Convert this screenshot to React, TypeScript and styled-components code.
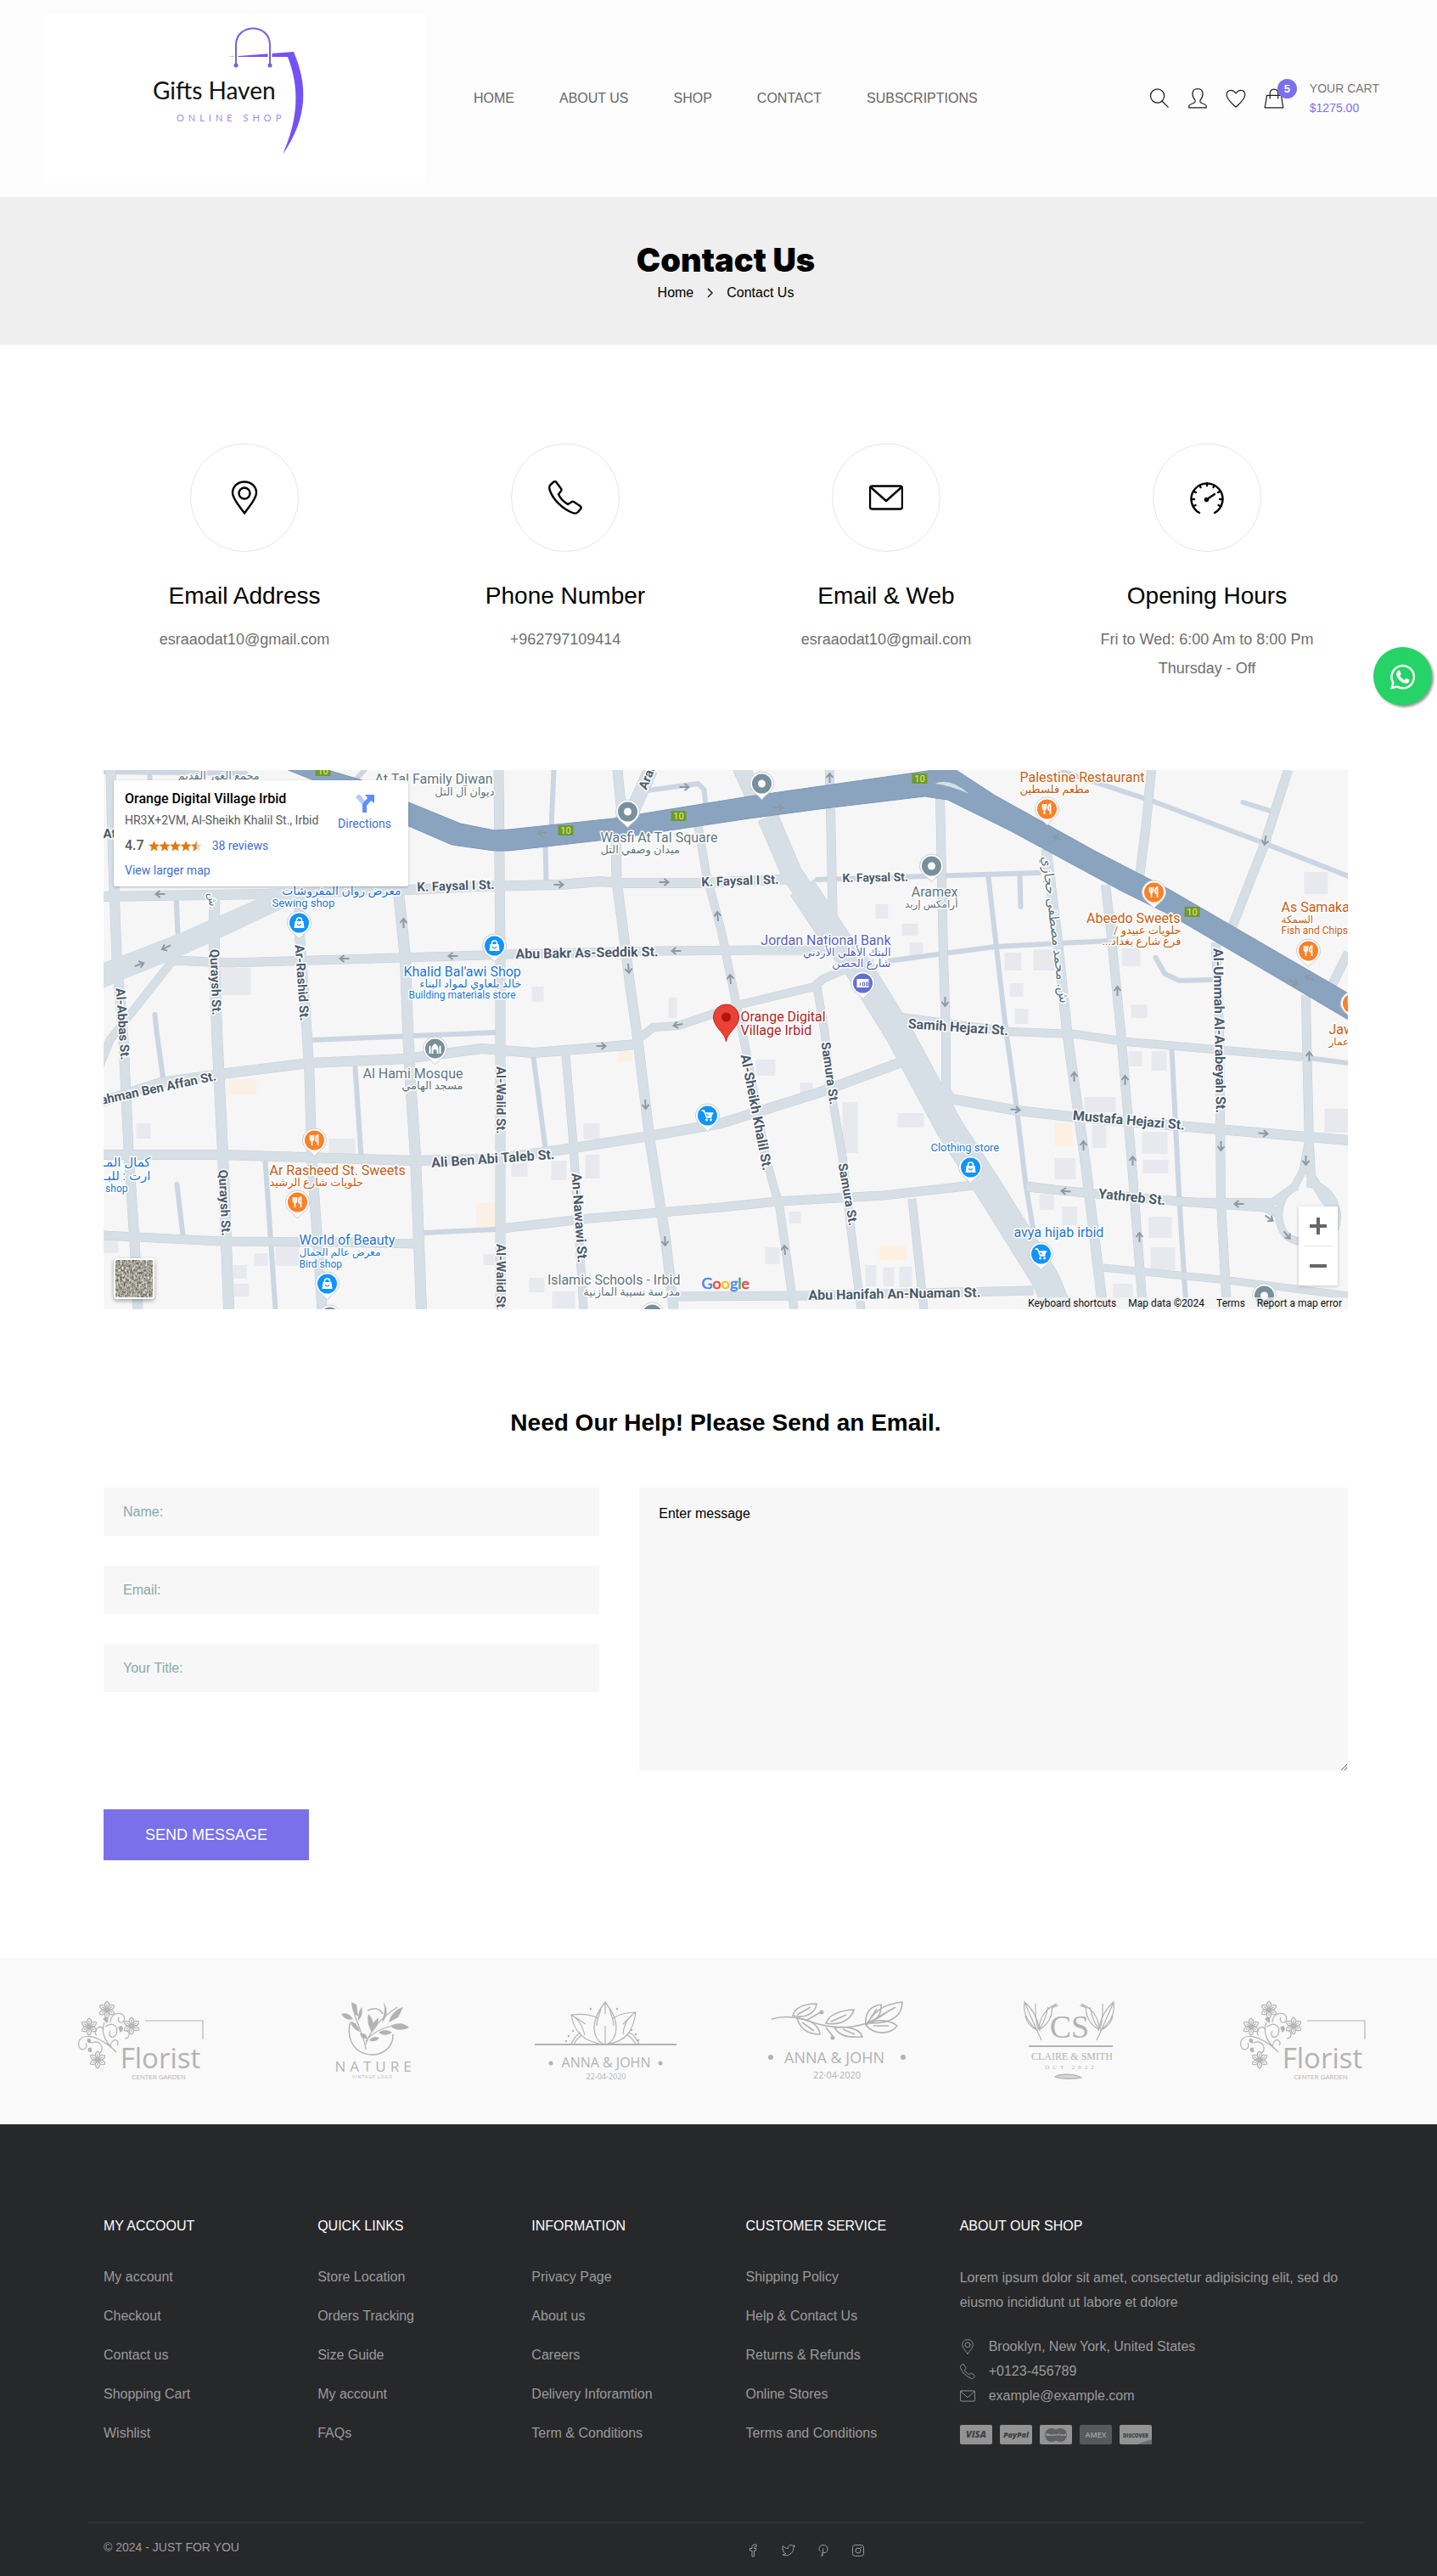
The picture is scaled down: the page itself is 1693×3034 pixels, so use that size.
import React from 'react';
import styled, { createGlobalStyle } from 'styled-components';

const GlobalStyle = createGlobalStyle`
  *, *::before, *::after { box-sizing: border-box; }
  body {
    margin: 0;
    background: #fff;
    color: #000;
    font-family: "Liberation Sans", Arial, sans-serif;
    font-size: 16px;
  }
  a { color: inherit; text-decoration: none; }
  h1, h2, h3, p, ul { margin: 0; padding: 0; font-weight: 400; }
  ul { list-style: none; }
  svg { display: block; }
`;

const ACCENT = '#7a70ea';

/* ---------- header ---------- */

const Header = styled.header`
  display: flex;
  align-items: center;
  padding: 17px 68px 17px 52px;
  background: #fdfdfd;
`;

const LogoLink = styled.a`
  flex: none;
  width: 449px;
  background: #fff;
`;

const Nav = styled.nav`
  display: flex;
  gap: 53px;
  margin-left: 57px;
  line-height: 24px;
  color: #666;
`;

const Tools = styled.div`
  display: flex;
  align-items: center;
  gap: 21px;
  margin-left: auto;
`;

const IconButton = styled.button`
  display: flex;
  padding: 0;
  border: 0;
  background: none;
  color: #1c1c1c;
  cursor: pointer;
`;

const CartLink = styled.a`
  position: relative;
  display: flex;
  align-items: center;
  gap: 30px;
  color: #1c1c1c;
`;

const Badge = styled.span`
  position: absolute;
  top: 0;
  left: 16px;
  width: 23px;
  height: 23px;
  border-radius: 50%;
  background: ${ACCENT};
  color: #fff;
  font-size: 13px;
  font-weight: 700;
  line-height: 23px;
  text-align: center;
`;

const CartText = styled.span`
  font-size: 14px;
  line-height: 23px;
  color: #777;
  white-space: nowrap;
`;

const CartTotal = styled.span`
  display: block;
  color: ${ACCENT};
`;

/* ---------- breadcrumb ---------- */

const Banner = styled.section`
  display: flex;
  flex-direction: column;
  align-items: center;
  padding: 48px 0 48px 17px;
  background: #efefef;
`;

const PageTitle = styled.h1`
  font-family: Inter, "Liberation Sans", sans-serif;
  font-size: 38px;
  font-weight: 900;
  line-height: 52px;
`;

const Crumbs = styled.nav`
  display: flex;
  align-items: center;
  gap: 15px;
  line-height: 26px;
`;

/* ---------- content ---------- */

const Container = styled.div`
  padding: 0 105px 0 122px;
`;

const InfoGrid = styled.section`
  display: grid;
  grid-template-columns: repeat(4, 1fr);
  padding: 116px 82px 103px 99px;
`;

const InfoCard = styled.div`
  display: flex;
  flex-direction: column;
  align-items: center;
  text-align: center;
`;

const InfoCircle = styled.div`
  display: flex;
  align-items: center;
  justify-content: center;
  width: 128px;
  height: 128px;
  margin-bottom: 34px;
  border: 1px solid #e6e6e6;
  border-radius: 50%;
`;

const InfoTitle = styled.h3`
  margin-bottom: 16px;
  font-size: 28px;
  line-height: 36px;
`;

const InfoText = styled.p`
  font-size: 18px;
  line-height: 34px;
  color: #6f6f6f;
`;

const MapFrame = styled.section`
  position: relative;
  height: 635px;
  overflow: hidden;
  background: #f6f6f6;
  font-family: Roboto, "DejaVu Sans", sans-serif;
`;

const PlaceCard = styled.div`
  position: absolute;
  top: 12px;
  left: 12px;
  display: flex;
  justify-content: space-between;
  width: 347px;
  height: 125px;
  padding: 12px 20px 0 13px;
  border-radius: 2px;
  background: #fff;
  box-shadow: 0 1px 3px rgba(0, 0, 0, 0.25);
  font-size: 14px;
  color: #3f6fd6;
`;

const PlaceName = styled.h2`
  font-size: 16px;
  font-weight: 500;
  line-height: 20px;
  color: #000;
`;

const PlaceAddress = styled.p`
  margin-top: 5px;
  line-height: 20px;
  color: #5b5b5b;
  white-space: nowrap;
`;

const Rating = styled.div`
  display: flex;
  align-items: center;
  gap: 5px;
  margin: 10px 0 9px;
  line-height: 20px;
`;

const Score = styled.span`
  font-size: 16px;
  font-weight: 500;
  color: #555;
`;

const Reviews = styled.a`
  margin-left: 6px;
`;

const MapLink = styled.a`
  line-height: 20px;
`;

const Directions = styled.a`
  display: flex;
  flex-direction: column;
  align-items: center;
  gap: 5px;
  padding-top: 4px;
`;

const ZoomBox = styled.div`
  position: absolute;
  right: 12px;
  bottom: 28px;
  width: 46px;
  background: #fff;
  box-shadow: 0 1px 4px rgba(0, 0, 0, 0.2);
`;

const ZoomButton = styled.button`
  display: flex;
  align-items: center;
  justify-content: center;
  width: 46px;
  height: 46px;
  padding: 0;
  border: 0;
  background: none;
  cursor: pointer;
`;

const ZoomRule = styled.div`
  height: 1px;
  margin: 0 6px;
  background: #e6e6e6;
`;

const LayerButton = styled.button`
  position: absolute;
  left: 12px;
  bottom: 12px;
  width: 48px;
  height: 48px;
  padding: 0;
  overflow: hidden;
  border: 2px solid #fff;
  border-radius: 4px;
  background: #a3a199;
  box-shadow: 0 2px 5px rgba(0, 0, 0, 0.35);
  cursor: pointer;
`;

const MapTerms = styled.div`
  position: absolute;
  right: 0;
  bottom: 0;
  display: flex;
  gap: 14px;
  padding: 0 7px;
  background: rgba(245, 245, 245, 0.7);
  font-size: 11px;
  line-height: 14px;
  color: #111;
  font-family: Roboto, "Liberation Sans", sans-serif;
  font-size: 12px;
  white-space: nowrap;
`;

/* ---------- form ---------- */

const FormTitle = styled.h2`
  margin: 116px 0 58px;
  font-size: 28px;
  font-weight: 700;
  line-height: 36px;
  text-align: center;
`;

const FormGrid = styled.div`
  display: grid;
  grid-template-columns: 7fr 10fr;
  column-gap: 47px;
  align-items: start;
`;

const Fields = styled.div`
  display: grid;
  gap: 35px;
`;

const HiddenLabel = styled.label`
  position: absolute;
  width: 1px;
  height: 1px;
  overflow: hidden;
  clip-path: inset(50%);
`;

const Input = styled.input`
  display: block;
  width: 100%;
  height: 57px;
  padding: 0 23px;
  border: 0;
  background: #f7f7f7;
  font: 16px "Liberation Sans", Arial, sans-serif;
  &::placeholder { color: #86aaa9; opacity: 1; }
`;

const TextArea = styled.textarea`
  display: block;
  width: 100%;
  height: 334px;
  padding: 22px 23px;
  border: 0;
  background: #f7f7f7;
  font: 16px "Liberation Sans", Arial, sans-serif;
  &::placeholder { color: #000; opacity: 1; }
`;

const SendButton = styled.button`
  height: 60px;
  margin: 45px 0 115px;
  padding: 0 49px;
  border: 0;
  background: ${ACCENT};
  color: #fff;
  font: 18px "Liberation Sans", Arial, sans-serif;
  cursor: pointer;
`;

/* ---------- brands ---------- */

const Brands = styled.section`
  display: grid;
  grid-template-columns: repeat(6, 1fr);
  justify-items: center;
  padding: 48px 22px 48px 28px;
  background: #f9f9f9;
`;

/* ---------- footer ---------- */

const Footer = styled.footer`
  padding: 108px 86px 0 104px;
  background: #27282a;
  color: #9b9b9b;
`;

const FooterGrid = styled.div`
  display: grid;
  grid-template-columns: 252fr 252fr 252fr 252fr 458fr;
  padding: 0 18px 90px;
`;

const FooterTitle = styled.h3`
  margin-bottom: 34px;
  font-size: 16px;
  line-height: 24px;
  color: #fff;
`;

const LinkList = styled.ul`
  display: grid;
  gap: 18px;
  line-height: 28px;
`;

const About = styled.p`
  margin-bottom: 23px;
  line-height: 29px;
`;

const ContactRow = styled.li`
  display: flex;
  align-items: center;
  gap: 16px;
  line-height: 29px;
`;

const Cards = styled.div`
  display: flex;
  gap: 9px;
  margin-top: 20px;
`;

const FooterBottom = styled.div`
  display: grid;
  grid-template-columns: 1fr 1fr;
  align-items: center;
  height: 64px;
  padding: 0 18px 6px;
  border-top: 2px solid #303133;
  font-size: 14px;
`;

const Socials = styled.div`
  display: flex;
  gap: 25px;
  padding: 7px 0 0 24px;
`;

const WhatsApp = styled.a`
  position: fixed;
  top: 762px;
  right: 6px;
  display: flex;
  align-items: center;
  justify-content: center;
  width: 69px;
  height: 69px;
  border-radius: 50%;
  background: #25d366;
  box-shadow: 2px 2px 3px #999;
`;

/* ---------- icons ---------- */

type IconName = 'search' | 'user' | 'heart' | 'bag' | 'pin' | 'phone' | 'mail' | 'gauge';

const shapes: Record<IconName, React.ReactNode> = {
  search: (
    <>
      <circle cx="16" cy="15" r="13.5" />
      <path d="M25 25 37 37" />
    </>
  ),
  user: (
    <path d="M20 1c-6 0-10 4-10 10 0 5 2 9 5 12v4c0 2-12 4-12 8v3h34v-3c0-4-12-6-12-8v-4c3-3 5-7 5-12 0-6-4-10-10-10z" />
  ),
  heart: (
    <path d="M20 37C14 31 2 22 2 13 2 7 6 4 10.500 4 15 4 18 7 20 10c2-3 5-6 9.500-6C34 4 38 7 38 13c0 9-12 18-18 24z" />
  ),
  bag: (
    <>
      <path d="M6 14h28l4 24H2z" />
      <path d="M12 20V11c0-5 3-9 8-9s8 4 8 9v9" />
    </>
  ),
  pin: (
    <>
      <path d="M20 38.500C15 31 6 22 6 14.500 6 7 12 1.500 20 1.500S34 7 34 14.500C34 22 25 31 20 38.500z" />
      <circle cx="20" cy="15" r="6.500" />
    </>
  ),
  phone: (
    <path d="M9 1.500 15 9.500C16 11 15.500 12 14.500 13L12 16C14 21 18 25 23 28L27 25.500C28 24.500 29 24.500 30 25L37.500 30C39 31 39 32.500 38 33.500L35 37C33 39 31 39 28.500 38 17 33.500 6 23 2 12 .5 8 1 6 3 4.500L6.500 1.500C7.500.7 8.300.7 9 1.500z" />
  ),
  mail: (
    <>
      <rect x="1" y="6.500" width="38" height="27" rx="2.500" />
      <path d="m2 8 18 16L38 8" />
    </>
  ),
  gauge: (
    <>
      <path d="M11 38a18.500 18.500 0 1 1 18 0" />
      <path d="M20 3v3M11.500 6l1 2M28.500 6l-1 2M5 13l2 1M35 13l-2 1M2 22h3M38 22h-3M4.500 30l2-1M35.500 30l-2-1M20 22l9-6" />
      <circle cx="19.500" cy="22.500" r="1.600" />
    </>
  ),
};

function Icon({ name, size, weight }: { name: IconName; size: number; weight: number }) {
  return (
    <svg
      width={size}
      height={size}
      viewBox="0 0 40 40"
      fill="none"
      stroke="currentColor"
      strokeWidth={weight}
      strokeLinejoin="round"
      strokeLinecap="round"
      aria-hidden="true"
    >
      {shapes[name]}
    </svg>
  );
}

function ShopLogo() {
  return (
    <svg viewBox="0 0 449 198" width="100%" role="img" aria-label="Gifts Haven online shop">
      <path d="M216 50 294 44C310 82 312 120 281 165 300 122 301 86 287 50z" fill="#7452f5" />
      <path d="M226 59V36c0-26 40-26 40 0v23" fill="none" stroke="#fff" strokeWidth="5" />
      <path d="M226 59V36c0-26 40-26 40 0v23" fill="none" stroke="#7562dc" strokeWidth="2" />
      <circle cx="226" cy="60" r="2.500" fill="#7562dc" />
      <circle cx="266" cy="60" r="2.500" fill="#7562dc" />
      <text x="128" y="100" fontFamily="Lato, sans-serif" fontSize="28" fill="#111">Gifts Haven</text>
      <text x="156" y="126" fontFamily="Lato, sans-serif" fontSize="11" letterSpacing="5" fill="#a18bea">ONLINE SHOP</text>
    </svg>
  );
}

/* ---------- map ---------- */

const roads: [number, string][] = [
  [11, '131,907 133,990 138,1128 146,1225 152,1355 159,1462 163,1542'],
  [11, '122,1056 310,1053 480,1048 560,1044 610,1043 660,1042 707,1038 730,1040 830,1040 940,1035'],
  [9, '205,1130 130,1225 118,1255'],
  [12, '253,1050 253,1128 256,1215 263,1358 270,1542'],
  [11, '353,1055 353,1095 362,1215 365,1265 368,1368 375,1468 380,1542'],
  [10, '205,1131 270,1134 473,1128 600,1124 777,1120 897,1119 975,1119'],
  [12, '470,1050 478,1128 481,1215 484,1272 490,1362 497,1542'],
  [11, '588,907 590,1128 590,1542'],
  [11, '728,907 733,958 726,992 727,1038 733,1082 743,1162 752,1225 766,1342 785,1462 794,1542'],
  [16, '767,907 747,952'],
  [9, '823,973 833,1032 850,1095 867,1178 876,1220 903,1365 919,1422 936,1542'],
  [20, '872,900 890,940'],
  [24, '905,962 933,1028 965,1075'],
  [32, '945,1045 987,1108 1013,1142 1060,1218 1119,1328 1167,1402 1233,1508 1250,1550'],
  [10, '978,907 978,925'],
  [10, '979,952 982,1095'],
  [9, '1030,1135 1000,1140 970,1153 960,1162 873,1183 800,1208 770,1210 750,1226'],
  [9, '963,1162 972,1215 979,1282 993,1362 1003,1448 1015,1542'],
  [10, '1108,938 1112,1128 1115,1215 1115,1285 1123,1296'],
  [11, '1233,1000 1245,1095 1258,1218 1280,1375 1300,1542'],
  [10, '1303,1042 1310,1105 1321,1215 1333,1358 1347,1542'],
  [10, '1357,907 1350,978 1343,1032'],
  [10, '1518,907 1490,995 1452,1092'],
  [10, '1589,1122 1570,1160'],
  [10, '1433,1110 1437,1215 1439,1415 1446,1542'],
  [10, '1539,1172 1540,1225 1543,1348 1545,1385 1560,1410 1576,1432'],
  [8, '1543,1340 1535,1380 1525,1398 1500,1416 1390,1415 1280,1405 1210,1396'],
  [9, '1063,1198 1190,1215 1267,1218 1328,1227 1534,1245'],
  [11, '1120,1294 1199,1308 1261,1315 1400,1327 1589,1343'],
  [11, '122,1360 261,1360 487,1367 582,1365 657,1355 766,1338 850,1323 965,1287 1065,1250'],
  [10, '1210,1398 1280,1405 1390,1415 1491,1422 1508,1430'],
  [10, '591,1447 695,1435 850,1422 917,1415 1041,1408 1156,1395'],
  [9, '1075,1412 1089,1542'],
  [10, '794,1527 953,1526 1218,1520'],
  [8, '1300,1493 1448,1508 1589,1526'],
  [11, '122,1297 190,1275 261,1265 365,1252 478,1247 568,1235 629,1240 752,1230'],
  [9, '667,1242 676,1348 688,1542'],
  [10, '122,1455 261,1462 384,1463 495,1465'],
  [8, '1529,1397 C1508,1405 1503,1430 1511,1448 C1520,1468 1560,1470 1572,1450 C1584,1425 1566,1394 1540,1394'],
];

const lanes: string[] = [
  '122,909 290,911',
  '177,907 177,925',
  '208,1055 210,1100',
  '367,1225 584,1216',
  '183,1195 185,1215 193,1272',
  '653,907 650,975',
  '643,995 644,1038',
  '763,931 823,923 830,930 832,948',
  '963,1036 1093,1032 1225,1028',
  '1047,1132 1090,1126 1173,1115 1307,1108',
  '1165,1033 1185,1208 1197,1295 1209,1395 1218,1450',
  '1202,1032 1203,1068',
  '1250,908 1357,943 1487,992 1589,1032',
  '1465,945 1497,955',
  '1362,1128 1373,1147 1390,1155 1427,1154',
  '1381,1235 1390,1415 1398,1542',
  '497,1452 584,1448',
  '419,1258 426,1362',
  '629,1245 643,1352',
  '313,1367 325,1542',
  '209,1395 216,1455',
  '1534,1245 1589,1252',
  '430,907 420,918',
];

const buildings: [number, number, number, number, string?][] = [
  [260, 1140, 36, 32], [627, 1162, 14, 18], [788, 1175, 10, 24], [1032, 1065, 15, 17], [1063, 1088, 19, 14],
  [1072, 1110, 16, 15], [1184, 1122, 20, 21], [1218, 1118, 25, 25], [1190, 1158, 16, 16], [1196, 1188, 16, 18],
  [1322, 1117, 22, 21], [1333, 1183, 19, 16], [1537, 1027, 28, 26], [161, 1323, 17, 18], [270, 1271, 33, 18, '#faf0e4'],
  [388, 1341, 31, 20], [603, 1370, 19, 16], [650, 1367, 18, 23], [690, 1360, 17, 28], [688, 1323, 19, 19],
  [562, 1417, 22, 28, '#faf0e4'], [325, 1465, 28, 26], [624, 1505, 18, 17], [651, 1521, 27, 20], [728, 1238, 17, 12, '#faf0e4'],
  [570, 1477, 13, 13], [275, 1490, 16, 16], [276, 1512, 18, 15], [891, 1248, 23, 19], [943, 1275, 15, 17],
  [993, 1298, 18, 60], [1058, 1311, 31, 17], [1278, 1292, 37, 18], [1243, 1323, 21, 27, '#fdf0e0'], [1287, 1325, 17, 27],
  [1243, 1364, 25, 25], [1346, 1333, 30, 26], [1347, 1366, 30, 16], [1357, 1238, 18, 23], [1330, 1238, 16, 18],
  [1561, 1306, 28, 28], [1225, 1407, 17, 18], [1252, 1421, 18, 22], [1354, 1433, 27, 25], [1356, 1469, 29, 27],
  [1036, 1467, 32, 17, '#fdf0e0'], [1020, 1490, 13, 25], [1041, 1493, 13, 22], [1060, 1492, 15, 24], [902, 1469, 17, 20],
  [930, 1427, 14, 14], [1312, 1512, 23, 19], [122, 1458, 18, 18], [300, 1476, 16, 15],
];

const arrows: [number, number, number][] = [
  [189, 1053, 180], [196, 1116, 155], [165, 1136, -20], [406, 1129, 180], [476, 1087, -90], [534, 1126, 180],
  [639, 981, 175], [659, 1042, 0], [783, 1039, 0], [807, 927, 0], [918, 951, -5], [978, 916, -90],
  [846, 1079, -95], [797, 1120, 180], [741, 1141, 85], [861, 1153, -95], [799, 1207, 170], [1246, 987, 205],
  [1491, 990, 100], [1114, 1180, 90], [1317, 1167, -90], [1525, 1157, 25], [1543, 1152, 205], [709, 1232, 0],
  [761, 1301, 87], [784, 1462, 87], [925, 1472, -95], [1266, 1268, -90], [1326, 1272, -90], [1277, 1349, -90],
  [1335, 1367, -90], [1343, 1457, -90], [1197, 1307, 5], [1489, 1335, 5], [1439, 1350, 90], [1256, 1403, 185],
  [1460, 1418, 180], [1496, 1435, 35], [1517, 1455, 50], [1539, 1367, 90], [1543, 1244, -90],
];

type Tone = 'street' | 'grey' | 'blue' | 'orange' | 'violet' | 'red';
const tones: Record<Tone, string> = {
  street: '#4a5a6b',
  grey: '#5f7681',
  blue: '#1f76d2',
  orange: '#c75d13',
  violet: '#5a63c0',
  red: '#b3221c',
};

interface Label {
  t: string;
  x: number;
  y: number;
  c: Tone;
  s?: number;
  r?: number;
  end?: boolean;
  rtl?: boolean;
}

const labels: Label[] = [
  { t: 'مجمع الغور القديم', x: 210, y: 918, c: 'grey', s: 13 },
  { t: 'At Tal Family Diwan', x: 442, y: 923, c: 'grey', s: 16 },
  { t: 'ديوان آل التل', x: 583, y: 937, c: 'grey', s: 13, end: true },
  { t: 'At', x: 122, y: 987, c: 'street' },
  { t: 'K. Faysal I St.', x: 492, y: 1050, c: 'street', r: -2 },
  { t: 'ش.', x: 246, y: 1052, c: 'grey', s: 13, r: 85 },
  { t: 'معرض روان المفروشات', x: 473, y: 1054, c: 'blue', s: 14, end: true },
  { t: 'Sewing shop', x: 321, y: 1068, c: 'blue', s: 13 },
  { t: "Khalid Bal'awi Shop", x: 476, y: 1150, c: 'blue', s: 16 },
  { t: 'خالد بلعاوي لمواد البناء', x: 615, y: 1163, c: 'blue', s: 13, end: true },
  { t: 'Building materials store', x: 482, y: 1176, c: 'blue', s: 12 },
  { t: 'Quraysh St.', x: 248, y: 1118, c: 'street', r: 88 },
  { t: 'Ar-Rashid St.', x: 348, y: 1113, c: 'street', r: 86 },
  { t: 'Al-Abbas St.', x: 137, y: 1164, c: 'street', r: 86 },
  { t: 'Abu Bakr As-Seddik St.', x: 608, y: 1129, c: 'street', r: -1, s: 16 },
  { t: 'Arar St.', x: 762, y: 931, c: 'street', r: -68 },
  { t: 'Wasfi At Tal Square', x: 708, y: 992, c: 'grey', s: 16 },
  { t: 'ميدان وصفي التل', x: 708, y: 1005, c: 'grey', s: 13 },
  { t: 'K. Faysal I St.', x: 827, y: 1044, c: 'street', r: -2 },
  { t: 'K. Faysal St.', x: 993, y: 1039, c: 'street', r: -1, s: 14 },
  { t: 'Aramex', x: 1129, y: 1056, c: 'grey', s: 16, end: true },
  { t: 'أرامكس إربد', x: 1129, y: 1069, c: 'grey', s: 12, end: true },
  { t: 'Jordan National Bank', x: 1050, y: 1113, c: 'violet', s: 16, end: true },
  { t: 'البنك الأهلي الأردني', x: 1050, y: 1126, c: 'violet', s: 13, end: true },
  { t: 'شارع الحصن', x: 1050, y: 1139, c: 'violet', s: 13, end: true },
  { t: 'Orange Digital', x: 873, y: 1203, c: 'red', s: 16 },
  { t: 'Village Irbid', x: 873, y: 1219, c: 'red', s: 16 },
  { t: 'Samih Hejazi St.', x: 1070, y: 1211, c: 'street', r: 4, s: 16 },
  { t: 'Palestine Restaurant', x: 1202, y: 921, c: 'orange', s: 16 },
  { t: 'مطعم فلسطين', x: 1202, y: 934, c: 'orange', s: 13 },
  { t: 'ش. محمد مصطفى حجازي', x: 1228, y: 1009, c: 'grey', r: 83, s: 16 },
  { t: 'Abeedo Sweets', x: 1391, y: 1087, c: 'orange', s: 16, end: true },
  { t: 'حلويات عبيدو /', x: 1392, y: 1100, c: 'orange', s: 13, rtl: true },
  { t: 'فرع شارع بغداد...', x: 1392, y: 1113, c: 'orange', s: 13, rtl: true },
  { t: 'As Samaka', x: 1510, y: 1074, c: 'orange', s: 16 },
  { t: 'السمكة', x: 1510, y: 1087, c: 'orange', s: 12 },
  { t: 'Fish and Chips', x: 1510, y: 1100, c: 'orange', s: 12 },
  { t: 'Jawharat', x: 1566, y: 1218, c: 'orange', s: 16 },
  { t: 'عمار', x: 1566, y: 1231, c: 'orange', s: 12 },
  { t: 'Al-Ummah Al-Arabeyah St.', x: 1430, y: 1117, c: 'street', r: 89, s: 16 },
  { t: 'Rahman Ben Affan St.', x: 256, y: 1272, c: 'street', r: -12, end: true },
  { t: 'Al Hami Mosque', x: 546, y: 1270, c: 'grey', s: 16, end: true },
  { t: 'مسجد الهامي', x: 546, y: 1283, c: 'grey', s: 13, end: true },
  { t: 'Al-Walid St.', x: 585, y: 1256, c: 'street', r: 90 },
  { t: 'Al-Walid St.', x: 585, y: 1465, c: 'street', r: 90 },
  { t: 'Ar Rasheed St. Sweets', x: 318, y: 1384, c: 'orange', s: 16 },
  { t: 'حلويات شارع الرشيد', x: 318, y: 1397, c: 'orange', s: 13 },
  { t: 'كمال المـ', x: 178, y: 1374, c: 'blue', s: 15, end: true },
  { t: 'ارت : للبـ', x: 178, y: 1390, c: 'blue', s: 15, rtl: true },
  { t: 'shop', x: 151, y: 1404, c: 'blue', s: 12, end: true },
  { t: 'Quraysh St.', x: 258, y: 1378, c: 'street', r: 87 },
  { t: 'Ali Ben Abi Taleb St.', x: 509, y: 1375, c: 'street', r: -4, s: 16 },
  { t: 'World of Beauty', x: 353, y: 1466, c: 'blue', s: 16 },
  { t: 'معرض عالم الجمال', x: 353, y: 1479, c: 'blue', s: 12 },
  { t: 'Bird shop', x: 353, y: 1493, c: 'blue', s: 12 },
  { t: 'An-Nawawi St.', x: 674, y: 1382, c: 'street', r: 86, s: 16 },
  { t: 'Islamic Schools - Irbid', x: 802, y: 1513, c: 'grey', s: 16, end: true },
  { t: 'مدرسة نسيبة المازنية', x: 802, y: 1526, c: 'grey', s: 13, end: true },
  { t: 'Al-Sheikh Khalil St.', x: 873, y: 1243, c: 'street', r: 79, s: 16 },
  { t: 'Samura St.', x: 968, y: 1228, c: 'street', r: 82 },
  { t: 'Samura St.', x: 988, y: 1371, c: 'street', r: 80 },
  { t: 'Clothing store', x: 1097, y: 1356, c: 'blue', s: 13 },
  { t: 'avya hijab irbid', x: 1195, y: 1457, c: 'blue', s: 16 },
  { t: 'Mustafa Hejazi St.', x: 1264, y: 1319, c: 'street', r: 5, s: 16 },
  { t: 'Yathreb St.', x: 1294, y: 1411, c: 'street', r: 6, s: 16 },
  { t: 'Abu Hanifah An-Nuaman St.', x: 953, y: 1531, c: 'street', r: -1, s: 16 },
];

type PinKind = 'shop' | 'cart' | 'food' | 'dot' | 'bank' | 'mosque';
const pins: [PinKind, number, number][] = [
  ['shop', 353, 1087], ['shop', 583, 1114], ['dot', 740, 956], ['dot', 898, 923], ['dot', 1098, 1020],
  ['bank', 1017, 1158], ['food', 1234, 953], ['food', 1360, 1051], ['food', 1542, 1120], ['food', 1594, 1182],
  ['mosque', 513, 1235], ['food', 371, 1343], ['food', 351, 1416], ['shop', 386, 1512], ['dot', 389, 1551],
  ['cart', 834, 1314], ['mosque', 769, 1548], ['shop', 1144, 1375], ['cart', 1227, 1477], ['dot', 1490, 1526],
];
const pinFill: Record<PinKind, string> = {
  shop: '#1194fb', cart: '#1194fb', food: '#fa8128', dot: '#78909c', bank: '#6470d0', mosque: '#78909c',
};
const pinGlyph: Record<PinKind, React.ReactNode> = {
  shop: (
    <>
      <path d="M-5-2H5L6 6H-6z" fill="#fff" />
      <path d="M-3-2v-1a3 3 0 0 1 6 0v1" fill="none" stroke="#fff" strokeWidth="1.500" />
      <path d="M-2 1a2 2 0 0 0 4 0" fill="none" stroke="#1194fb" strokeWidth="1.200" />
    </>
  ),
  cart: (
    <>
      <path d="M-7-6h3l3 8h6M-3-3h9L4 1h-5z" fill="#fff" stroke="#fff" strokeWidth="1.300" />
      <circle cx="-1" cy="5" r="1.400" fill="#fff" />
      <circle cx="4" cy="5" r="1.400" fill="#fff" />
    </>
  ),
  food: (
    <path d="M-5-6v4c0 3 4 3 4 0v-4M-3-6V6M4 6V-6C1-5 1-1 2 1h2" fill="none" stroke="#fff" strokeWidth="1.700" />
  ),
  dot: <circle r="4.500" fill="#fff" />,
  bank: (
    <>
      <rect x="-7" y="-5" width="14" height="10" fill="#fff" />
      <path d="M-3-1v4M0-1v4h2v-4zM4-1v4h2v-4z" fill="none" stroke="#6470d0" />
    </>
  ),
  mosque: (
    <path d="M-7 6v-8l1-2 1 2V6zM5 6v-8l1-2 1 2V6zM-4 6V0q0-3 4-6 4 3 4 6v6H2V2Q0 0-2 2v4z" fill="#fff" />
  ),
};

const path = (points: string) => 'M' + points.replace(/,/g, ' ');

function CityMap() {
  return (
    <svg
      viewBox="122 907 1467 635"
      width="100%"
      height="100%"
      preserveAspectRatio="xMidYMid slice"
      role="img"
      aria-label="Street map of Irbid"
    >
      <rect x="0" y="800" width="1800" height="900" fill="#f6f6f6" />
      {buildings.map(([x, y, w, h, fill], i) => (
        <rect key={i} x={x} y={y} width={w} height={h} fill={fill ?? '#e8e9ef'} />
      ))}
      <g fill="none" stroke="#cbd6e2" strokeLinejoin="round" strokeLinecap="round" strokeWidth="6">
        {lanes.map((p) => <path key={p} d={path(p)} />)}
      </g>
      <g fill="none" strokeLinejoin="round">
        {roads.map(([w, p]) => <path key={p} d={path(p)} stroke="#c5cfd8" strokeWidth={w + 1} />)}
        {roads.map(([w, p]) => <path key={p} d={path(p)} stroke="#d6dfe6" strokeWidth={w} />)}
      </g>
      <path d="M122 1134 210 1100 310 1056H363L260 1105 210 1128 150 1152 122 1164z" fill="#d6dfe6" />
      <path
        d="M387 907 427 919 482 945 543 970 583 978 600 977 723 964 883 938 1100 907H1127L1173 937 1290 1002 1377 1047 1589 1170V1201L1540 1172 1380 1078 1323 1050 1190 978 1117 942 1090 938 973 952 883 964 723 988 600 1002H583L533 995 482 973 410 935 340 907z"
        fill="#8aa4c0"
        stroke="#7b97b6"
      />
      <path d="M1102 923Q1120 915 1142 935 1120 925 1102 923z" fill="#d6dfe6" />
      {arrows.map(([x, y, r]) => (
        <path
          key={`${x}-${y}`}
          d="M-6 0H4M0-4 5 0 0 4"
          transform={`translate(${x} ${y}) rotate(${r})`}
          fill="none"
          stroke="#8d98a3"
          strokeWidth="2"
        />
      ))}
      {[[381, 908], [667, 978], [800, 961], [1084, 917], [1405, 1074]].map(([x, y]) => (
        <g key={x} transform={`translate(${x} ${y})`}>
          <rect x="-9" y="-6" width="18" height="12" fill="#6a9a35" />
          <text y="4" textAnchor="middle" fontSize="11" fill="#f2ee4e">10</text>
        </g>
      ))}
      {labels.map((l, i) => (
        <text
          key={i}
          transform={`translate(${l.x} ${l.y}) rotate(${l.r ?? 0})`}
          textAnchor={l.end ? 'end' : 'start'}
          direction={l.rtl ? 'rtl' : 'ltr'}
          fontSize={l.s ?? 15}
          fontWeight={l.c === 'street' ? 700 : 400}
          fill={tones[l.c]}
          stroke="#fff"
          strokeWidth="3"
          strokeLinejoin="round"
          paintOrder="stroke"
        >
          {l.t}
        </text>
      ))}
      {pins.map(([kind, x, y]) => (
        <g key={`${x}-${y}`} transform={`translate(${x} ${y})`}>
          <path d="M0 19C-3 14-14 9-14 0A14 14 0 0 1 14 0C14 9 3 14 0 19z" fill="#fff" stroke="#c9ccd1" strokeWidth="1" />
          <circle r="11.500" fill={pinFill[kind]} />
          {pinGlyph[kind]}
        </g>
      ))}
      <path
        d="M856 1227C855 1216 841 1210 841 1198A15 15 0 0 1 871 1198C871 1210 857 1216 856 1227z"
        fill="#ea4335"
        stroke="#c5221f"
      />
      <circle cx="856" cy="1198" r="5.500" fill="#b31412" />
      <text x="827" y="1518" fontFamily="Lato, sans-serif" fontSize="18" fontWeight="400">
        {[['G', '#4285f4'], ['o', '#ea4335'], ['o', '#fbbc04'], ['g', '#4285f4'], ['l', '#34a853'], ['e', '#ea4335']].map(
          ([letter, color], i) => <tspan key={i} fill={color} stroke={color} strokeWidth="0.5">{letter}</tspan>,
        )}
      </text>
    </svg>
  );
}

function Stars() {
  const star = 'M6.500 0 8.300 4.500 13 4.800 9.400 7.900 10.600 12.600 6.500 10 2.400 12.600 3.600 7.900 0 4.800 4.700 4.500z';
  return (
    <svg width="64" height="13" viewBox="0 0 64 13" role="img" aria-label="4.7 stars">
      {[0, 12.5, 25, 37.5].map((x) => <path key={x} d={star} transform={`translate(${x} 0)`} fill="#e17a10" />)}
      <path d={star} transform="translate(50 0)" fill="#d4d4d4" />
      <path d="M56.500 0V10L52.400 12.600 53.600 7.900 50 4.800 54.700 4.500z" fill="#e17a10" />
    </svg>
  );
}

function Satellite() {
  return (
    <svg width="44" height="44" aria-hidden="true">
      <filter id="ground" colorInterpolationFilters="sRGB">
        <feTurbulence type="fractalNoise" baseFrequency="0.5 0.35" numOctaves="3" seed="4" />
        <feColorMatrix values="1 0 0 0 0.14  1 0 0 0 0.13  1 0 0 0 0.09  0 0 0 0 1" />
      </filter>
      <rect width="44" height="44" filter="url(#ground)" />
    </svg>
  );
}

/* ---------- brand logos ---------- */

const LOGO_INK = '#b3b3b3';

function BrandFrame({ name, children }: { name: string; children: React.ReactNode }) {
  return (
    <svg width="170" height="100" viewBox="0 0 170 100" fill="none" stroke={LOGO_INK} strokeWidth="1.200" role="img" aria-label={name}>
      {children}
    </svg>
  );
}

interface WordProps {
  x: number;
  y: number;
  size: number;
  family?: string;
  track?: number;
  weight?: number;
  children: string;
}

function Word({ x, y, size, family = '"Open Sans"', track = 0, weight = 400, children }: WordProps) {
  return (
    <text
      x={x}
      y={y}
      textAnchor="middle"
      fontFamily={`${family}, sans-serif`}
      fontSize={size}
      fontWeight={weight}
      letterSpacing={track}
      fill={LOGO_INK}
      stroke="none"
    >
      {children}
    </text>
  );
}

function Blossom({ x, y }: { x: number; y: number }) {
  return (
    <g transform={`translate(${x} ${y})`}>
      {[0, 60, 120, 180, 240, 300].map((a) => (
        <path key={a} d="M0-1C-4-4-3-8 0-10 3-8 4-4 0-1zM0-2V-7" transform={`rotate(${a})`} />
      ))}
      <circle r="1.500" />
    </g>
  );
}

function Florist() {
  return (
    <BrandFrame name="Florist">
      <Blossom x={46} y={13} />
      <Blossom x={25} y={33} />
      <Blossom x={75} y={32} />
      <Blossom x={35} y={72} />
      <path d="M57 63C45 52 38 42 43 28M44 33C54 26 60 34 57 42 53 49 46 44 50 38M42 37C38 27 28 40 34 43M50 28C50 14 70 14 66 26 63 31 57 26 60 22M66 38c8-2 8 9 1 9M54 60C26 36 10 44 13 56 16 64 25 58 21 52M28 52c10-4 15 6 10 12M50 55c4-12 12-4 8 0" />
      <path d="M42 24c4-4 6 0 4 4zM60 34c4-4 6 2 2 5zM26 48c-4-2-4 4 1 4zM27 58c-5 0-3 6 1 4z" fill={LOGO_INK} />
      <path d="M91 26H159V48" />
      <Word x={109} y={82} size={33} weight={500}>Florist</Word>
      <Word x={107} y={95} size={8}>CENTER GARDEN</Word>
    </BrandFrame>
  );
}

function Nature() {
  return (
    <BrandFrame name="Nature">
      <path d="M58 29C50 76 110 76 109 42M79 14Q92 8 97 18" strokeWidth="1.500" />
      <path d="M77 60C76 46 66 30 61 8M77 54C82 36 96 22 114 10M77 50C84 40 100 32 120 30" />
      <path
        d="M60 4l6 3 2 14c-6-3-7-9-8-17zM48 18c6-2 10 0 14 6-6 2-10 0-14-6zM72 10c2 6 0 12-4 16 0-6 0-10 4-16zM58 27c6 0 10 4 12 12-6-2-9-6-12-12zM98 4c6 10 4 18-2 24 2-8 4-14 2-24zM121 10l-6 12-11 6c2-8 8-16 17-18zM128 34c-8 4-16 4-22-2 8-4 16-4 22 2zM80 18c6 6 8 14 4 22-4-8-6-14-4-22zM92 22c0 10-4 14-9 18 0-8 3-13 9-18zM108 40c-6 4-12 3-16 0 5-4 11-4 16 0zM70 41c5-1 8 1 9 6-5 1-8-1-9-6zM93 46c-4 5-8 5-12 3 3-4 7-5 12-3z"
        fill={LOGO_INK}
        stroke="none"
      />
      <Word x={88} y={86} size={17} track={5} weight={500}>NATURE</Word>
      <Word x={85} y={94} size={5} track={1}>VINTAGE LOGO</Word>
    </BrandFrame>
  );
}

function Lotus() {
  return (
    <BrandFrame name="Anna and John">
      <path d="M2 54H169" strokeWidth="2" />
      <path d="M85 4C67 26 69 46 83 54H87C101 46 103 26 85 4zM85 4V18M85 32V54" />
      <path d="M76 23C66 17 54 18 45 19 48 38 58 50 83 54M94 23C104 17 114 16 121 16 118 38 110 50 87 54M45 19c8 4 14 14 16 24M121 16c-8 5-14 14-15 26M50 22l12 8M116 20l-10 10M80 12c-2 8-5 12-5 20M90 12c2 8 5 12 5 20" />
      <path d="M45 54C47 48 51 43 56 40M48 54C51 48 54 45 58 43M125 54C122 46 118 42 113 40M121 54C118 48 115 45 111 43" />
      {[[68, 12], [99, 12], [47, 38], [42, 44], [39, 50], [116, 37], [121, 42], [124, 49]].map(([x, y]) => (
        <circle key={x} cx={x} cy={y} r="1.200" fill={LOGO_INK} stroke="none" />
      ))}
      <circle cx="21" cy="76" r="2.500" fill={LOGO_INK} stroke="none" />
      <circle cx="150" cy="76" r="2.500" fill={LOGO_INK} stroke="none" />
      <Word x={86} y={81} size={16}>{'ANNA & JOHN'}</Word>
      <Word x={86} y={95} size={9}>22-04-2020</Word>
    </BrandFrame>
  );
}

function Branch() {
  return (
    <BrandFrame name="Anna and John">
      <g strokeWidth="1.600">
        <path d="M8 24C30 18 44 24 60 29 90 38 120 34 142 17" />
        <path d="M33 20C36 10 46 6 61 6 60 16 50 24 33 20zM38 19 54 10M38 23C42 36 52 42 65 42 64 32 54 24 38 23zM44 28 58 38M72 29C76 18 88 14 105 13 102 24 90 32 72 29zM78 27 96 19M82 34C88 44 98 46 115 45 112 36 100 32 82 34zM92 36 106 42M119 29C118 16 126 8 137 7 138 18 132 26 119 29zM124 24 132 12M121 29C132 10 146 6 162 4 162 20 150 30 121 29zM130 24 154 10M119 31C130 24 146 24 156 32 148 42 130 44 119 31zM128 32 146 32M50 25 66 16M72 34 80 44" />
      </g>
      <circle cx="67" cy="16" r="2.500" fill={LOGO_INK} stroke="none" />
      <circle cx="80" cy="46" r="2.500" fill={LOGO_INK} stroke="none" />
      <circle cx="7" cy="69" r="3" fill={LOGO_INK} stroke="none" />
      <circle cx="163" cy="69" r="3" fill={LOGO_INK} stroke="none" />
      <Word x={82} y={76} size={18} weight={500}>{'ANNA & JOHN'}</Word>
      <Word x={85} y={94} size={11}>22·04·2020</Word>
    </BrandFrame>
  );
}

const sprig =
  'M52 49C44 32 38 18 32 4 30 18 36 28 48 38M48 38C40 34 34 28 33 20M50 38C48 26 44 14 32 4M48 36C44 22 45 12 45 6M49 36C50 22 56 12 70 6M50 36C60 30 66 20 64 8M49 36C58 26 58 14 60 10M64 12l6-6M66 10l6-2';

function Claire() {
  return (
    <BrandFrame name="Claire and Smith">
      <path d={sprig} />
      <path d={sprig} transform="translate(169 0) scale(-1 1)" />
      <Word x={85} y={46} size={38} family={'"Liberation Serif"'}>CS</Word>
      <path d="M37 56H136" strokeWidth="2" />
      <Word x={88} y={72} size={12} family={'"Liberation Serif"'}>{'CLAIRE & SMITH'}</Word>
      <Word x={87} y={83} size={7} track={4} family={'"Liberation Serif"'}>OCT 2022</Word>
      <path d="M68 92C74 88 90 88 99 93 90 95 74 95 68 92z" fill="#d5d5d5" />
    </BrandFrame>
  );
}

/* ---------- payment cards and social marks ---------- */

const cardTextSize: Record<string, number> = { VISA: 11, PayPal: 9, MasterCard: 4, AMEX: 9, DISCOVER: 6 };

function PaymentCard({ label, dark, round }: { label: string; dark?: boolean; round?: boolean }) {
  return (
    <svg width="38" height="23" viewBox="0 0 38 23" role="img" aria-label={label}>
      <rect width="38" height="23" rx="2" fill={dark ? '#58595b' : '#939393'} />
      {round && (
        <>
          <circle cx="14" cy="12" r="8" fill="#5f6062" />
          <circle cx="24" cy="12" r="8" fill="#5f6062" />
        </>
      )}
      {label === 'DISCOVER' && <path d="M20 23 38 17V23z" fill="#6b6c6d" />}
      <text
        x="19"
        y={round ? 13 : 15}
        textAnchor="middle"
        fontFamily='"Open Sans", sans-serif'
        fontSize={cardTextSize[label]}
        fontWeight={dark ? 600 : 800}
        fontStyle={label === 'VISA' || label === 'PayPal' ? 'italic' : 'normal'}
        fill={dark || round ? '#a5a5a5' : '#414244'}
      >
        {label}
      </text>
    </svg>
  );
}

const socialPaths: Record<string, React.ReactNode> = {
  Facebook: <path d="M6 15V8H3.500V5.500H6V4c0-2 1-3 3-3h2v2.500H9.500C8.700 3.500 8.500 4 8.500 4.500v1H11L10.500 8h-2v7z" />,
  Twitter: <path d="M1 13c2 0 3-.500 4-1.500-1.500 0-2.500-1-3-2h1C1.500 9 1 7.500 1 6.500l1 .500C1 6 .500 4 1.500 2.500 3 4.500 5 5.500 7.500 5.500 7 3 9 1.500 11 1.500c1 0 1.500.500 2 1l2-.500-1 1.500 1.500-.500L14 4.500C14 11 7 16 1 13z" />,
  Pinterest: <path d="M6 15c1-1 1.500-3 2-5 3 2 5-1 5-4 0-2-1.500-4.500-5-4.500S3 4 3 6c0 1 .500 2.500 1.500 3M8 5.500 6 15" />,
  Instagram: (
    <>
      <rect x="1.500" y="1.500" width="13" height="13" rx="3" />
      <circle cx="8" cy="8" r="3" />
      <circle cx="11.500" cy="4.500" r=".5" />
    </>
  ),
};

/* ---------- page ---------- */

const navItems = ['HOME', 'ABOUT US', 'SHOP', 'CONTACT', 'SUBSCRIPTIONS'];

const infoItems: { icon: IconName; title: string; lines: string[] }[] = [
  { icon: 'pin', title: 'Email Address', lines: ['esraaodat10@gmail.com'] },
  { icon: 'phone', title: 'Phone Number', lines: ['+962797109414'] },
  { icon: 'mail', title: 'Email & Web', lines: ['esraaodat10@gmail.com'] },
  { icon: 'gauge', title: 'Opening Hours', lines: ['Fri to Wed: 6:00 Am to 8:00 Pm', 'Thursday - Off'] },
];

const footerColumns: { title: string; links: string[] }[] = [
  { title: 'MY ACCOOUT', links: ['My account', 'Checkout', 'Contact us', 'Shopping Cart', 'Wishlist'] },
  { title: 'QUICK LINKS', links: ['Store Location', 'Orders Tracking', 'Size Guide', 'My account', 'FAQs'] },
  { title: 'INFORMATION', links: ['Privacy Page', 'About us', 'Careers', 'Delivery Inforamtion', 'Term & Conditions'] },
  { title: 'CUSTOMER SERVICE', links: ['Shipping Policy', 'Help & Contact Us', 'Returns & Refunds', 'Online Stores', 'Terms and Conditions'] },
];

const contactRows: [IconName, string][] = [
  ['pin', 'Brooklyn, New York, United States'],
  ['phone', '+0123-456789'],
  ['mail', 'example@example.com'],
];

const fields: [string, string, string][] = [
  ['name', 'Name:', 'text'],
  ['email', 'Email:', 'email'],
  ['title', 'Your Title:', 'text'],
];

export default function App() {
  return (
    <>
      <GlobalStyle />
      <Header>
        <LogoLink href="#home"><ShopLogo /></LogoLink>
        <Nav aria-label="Main">
          {navItems.map((item) => <a key={item} href="#nav">{item}</a>)}
        </Nav>
        <Tools>
          <IconButton type="button" aria-label="Search"><Icon name="search" size={24} weight={2} /></IconButton>
          <IconButton type="button" aria-label="Account"><Icon name="user" size={24} weight={2} /></IconButton>
          <IconButton type="button" aria-label="Wishlist"><Icon name="heart" size={24} weight={2} /></IconButton>
          <CartLink href="#cart">
            <Icon name="bag" size={24} weight={2} />
            <Badge>5</Badge>
            <CartText>YOUR CART<CartTotal>$1275.00</CartTotal></CartText>
          </CartLink>
        </Tools>
      </Header>

      <Banner>
        <PageTitle>Contact Us</PageTitle>
        <Crumbs aria-label="Breadcrumb">
          <a href="#home">Home</a>
          <svg width="9" height="12" viewBox="0 0 9 12" fill="none" stroke="#222" strokeWidth="1.500" aria-hidden="true">
            <path d="M2 1 7 6 2 11" />
          </svg>
          <span>Contact Us</span>
        </Crumbs>
      </Banner>

      <main>
        <InfoGrid>
          {infoItems.map((item) => (
            <InfoCard key={item.title}>
              <InfoCircle><Icon name={item.icon} size={40} weight={2.4} /></InfoCircle>
              <InfoTitle>{item.title}</InfoTitle>
              {item.lines.map((line) => <InfoText key={line}>{line}</InfoText>)}
            </InfoCard>
          ))}
        </InfoGrid>

        <Container>
          <MapFrame>
            <CityMap />
            <PlaceCard>
              <div>
                <PlaceName>Orange Digital Village Irbid</PlaceName>
                <PlaceAddress>HR3X+2VM, Al-Sheikh Khalil St., Irbid</PlaceAddress>
                <Rating>
                  <Score>4.7</Score>
                  <Stars />
                  <Reviews href="#reviews">38 reviews</Reviews>
                </Rating>
                <MapLink href="#map">View larger map</MapLink>
              </div>
              <Directions href="#directions">
                <svg width="22" height="22" viewBox="0 0 22 22" aria-hidden="true">
                  <path d="M0 4 4 0 12 9 8 13z" fill="#b5ccfa" />
                  <path d="M8 22V12L14 5 11 1H22V11L18 8 13 14V22z" fill="#5f8ff5" />
                </svg>
                Directions
              </Directions>
            </PlaceCard>
            <LayerButton type="button" aria-label="Show satellite imagery"><Satellite /></LayerButton>
            <ZoomBox>
              <ZoomButton type="button" aria-label="Zoom in">
                <svg width="20" height="20" viewBox="0 0 20 20" stroke="#666" strokeWidth="4" aria-hidden="true"><path d="M0 10H20M10 0V20" /></svg>
              </ZoomButton>
              <ZoomRule />
              <ZoomButton type="button" aria-label="Zoom out">
                <svg width="20" height="20" viewBox="0 0 20 20" stroke="#666" strokeWidth="4" aria-hidden="true"><path d="M0 10H20" /></svg>
              </ZoomButton>
            </ZoomBox>
            <MapTerms>
              <span>Keyboard shortcuts</span>
              <span>Map data ©2024</span>
              <a href="#terms">Terms</a>
              <a href="#report">Report a map error</a>
            </MapTerms>
          </MapFrame>

          <FormTitle>Need Our Help! Please Send an Email.</FormTitle>
          <form onSubmit={(e) => e.preventDefault()}>
            <FormGrid>
              <Fields>
                {fields.map(([id, label, type]) => (
                  <div key={id}>
                    <HiddenLabel htmlFor={id}>{label}</HiddenLabel>
                    <Input id={id} type={type} placeholder={label} />
                  </div>
                ))}
              </Fields>
              <div>
                <HiddenLabel htmlFor="message">Enter message</HiddenLabel>
                <TextArea id="message" placeholder="Enter message" />
              </div>
            </FormGrid>
            <SendButton type="submit">SEND MESSAGE</SendButton>
          </form>
        </Container>

        <Brands>
          <Florist />
          <Nature />
          <Lotus />
          <Branch />
          <Claire />
          <Florist />
        </Brands>
      </main>

      <Footer>
        <FooterGrid>
          {footerColumns.map((column) => (
            <div key={column.title}>
              <FooterTitle>{column.title}</FooterTitle>
              <LinkList>
                {column.links.map((link) => <li key={link}><a href="#link">{link}</a></li>)}
              </LinkList>
            </div>
          ))}
          <div>
            <FooterTitle>ABOUT OUR SHOP</FooterTitle>
            <About>Lorem ipsum dolor sit amet, consectetur adipisicing elit, sed do eiusmo incididunt ut labore et dolore</About>
            <ul>
              {contactRows.map(([icon, text]) => (
                <ContactRow key={icon}><Icon name={icon} size={18} weight={2} />{text}</ContactRow>
              ))}
            </ul>
            <Cards>
              <PaymentCard label="VISA" />
              <PaymentCard label="PayPal" />
              <PaymentCard label="MasterCard" round />
              <PaymentCard label="AMEX" dark />
              <PaymentCard label="DISCOVER" />
            </Cards>
          </div>
        </FooterGrid>
        <FooterBottom>
          <span>© 2024 - JUST FOR YOU</span>
          <Socials>
            {Object.entries(socialPaths).map(([name, shape]) => (
              <a key={name} href="#social" aria-label={name}>
                <svg width="16" height="16" viewBox="0 0 16 16" fill="none" stroke="currentColor" strokeWidth="1" aria-hidden="true">{shape}</svg>
              </a>
            ))}
          </Socials>
        </FooterBottom>
      </Footer>

      <WhatsApp href="#whatsapp" aria-label="Chat on WhatsApp">
        <svg width="32" height="32" viewBox="0 0 32 32" fill="#fff" aria-hidden="true">
          <path d="M1 31 3 23.500A14.500 14.500 0 1 1 8.500 29zM4.500 27.500 9 26.300A12 12 0 1 0 5.700 23z" fillRule="evenodd" />
          <path d="M11 8.500c.600 0 1 0 1.300.700l1.300 3c.200.600-.200 1.200-1.400 2.600 1.400 2.500 3 4 5.600 5.100 1-1 1.500-2 2.100-1.800l3.200 1.500c.900.400.200 3-1.100 3.700-3.500 1.900-8.500-1-11.300-4.300C8.500 16 7.500 13.500 8.500 11c.600-1.500 1.500-2.400 2.500-2.500z" />
        </svg>
      </WhatsApp>
    </>
  );
}
